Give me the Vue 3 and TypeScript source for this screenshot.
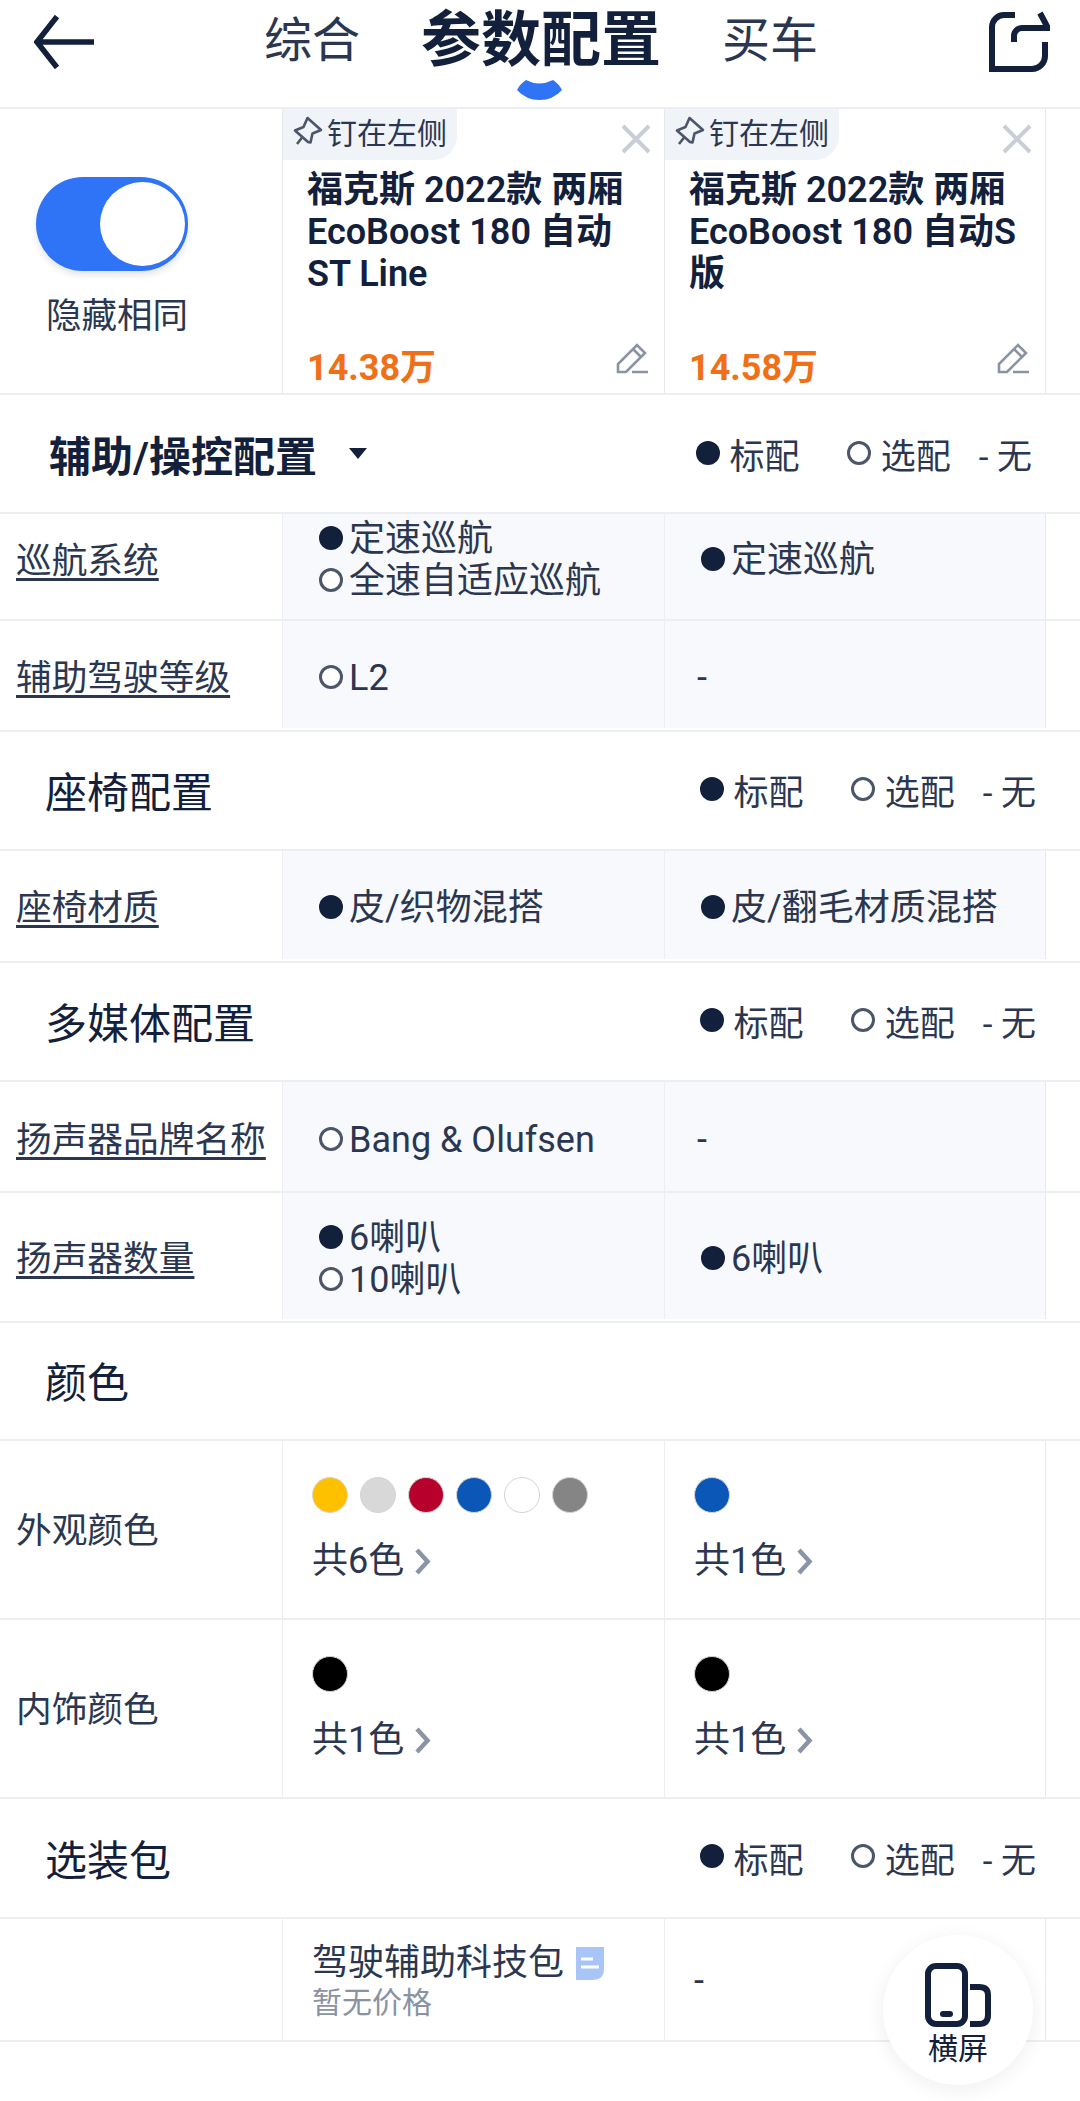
<script setup lang="ts">
type Val = { mark?: 'std' | 'opt'; text: string }
type Row = { kind: 'row'; label: string; link: boolean; cls: string; a: Val[]; b: Val[] }
type Sec = { kind: 'sec'; title: string; legend: boolean; cls: string }
type Col = { kind: 'col'; label: string; a: string[]; b: string[]; at: string; bt: string }
type Item = Row | Sec | Col

const items: Item[] = [
  { kind: 'row', label: '巡航系统', link: true, cls: 'r-cruise',
    a: [{ mark: 'std', text: '定速巡航' }, { mark: 'opt', text: '全速自适应巡航' }], b: [{ mark: 'std', text: '定速巡航' }] },
  { kind: 'row', label: '辅助驾驶等级', link: true, cls: 'r-111 end',
    a: [{ mark: 'opt', text: 'L2' }], b: [{ text: '-' }] },
  { kind: 'sec', title: '座椅配置', legend: true, cls: 's-119' },
  { kind: 'row', label: '座椅材质', link: true, cls: 'r-112 end',
    a: [{ mark: 'std', text: '皮/织物混搭' }], b: [{ mark: 'std', text: '皮/翻毛材质混搭' }] },
  { kind: 'sec', title: '多媒体配置', legend: true, cls: 's-119' },
  { kind: 'row', label: '扬声器品牌名称', link: true, cls: 'r-111',
    a: [{ mark: 'opt', text: 'Bang & Olufsen' }], b: [{ text: '-' }] },
  { kind: 'row', label: '扬声器数量', link: true, cls: 'r-130 end',
    a: [{ mark: 'std', text: '6喇叭' }, { mark: 'opt', text: '10喇叭' }], b: [{ mark: 'std', text: '6喇叭' }] },
  { kind: 'sec', title: '颜色', legend: false, cls: 's-118' },
  { kind: 'col', label: '外观颜色', a: ['#ffc000', '#d8d8d8', '#b8002c', '#0a57b8', '#ffffff', '#858585'], b: ['#0a57b8'], at: '共6色', bt: '共1色' },
  { kind: 'col', label: '内饰颜色', a: ['#000000'], b: ['#000000'], at: '共1色', bt: '共1色' },
  { kind: 'sec', title: '选装包', legend: true, cls: 's-120' }
]

const cars = [
  { name: '福克斯 2022款 两厢 EcoBoost 180 自动 ST Line', price: '14.38万' },
  { name: '福克斯 2022款 两厢 EcoBoost 180 自动S版', price: '14.58万' }
]
</script>

<template>
  <div class="page">
    <header class="top">
      <svg class="back" viewBox="0 0 60 54" width="60" height="54" fill="none" stroke="#13203b" stroke-width="5.5">
        <path d="M23 1.5 3 27l20 25.5M3 27h57" />
      </svg>
      <nav class="tabs">
        <span class="tab">综合</span>
        <span class="tab active">参数配置
          <svg class="crescent" viewBox="0 0 45 20" width="45" height="20"><path d="M9 0Q22 7 36 0Q42 4 45 10Q36 20 22.5 20Q9 20 0 10Q3 4 9 0Z" fill="#2f73f6" /></svg>
        </span>
        <span class="tab">买车</span>
      </nav>
      <svg class="share" viewBox="28 10 62 62" width="62" height="62" fill="none" stroke="#13203b" stroke-width="6">
        <path d="M55 15H44A12 12 0 0 0 32 27V69H72A13 13 0 0 0 85 56V42" />
        <path d="M54 42V36A8 8 0 0 1 62 28H88L80 13" />
      </svg>
    </header>

    <section class="cars">
      <div class="toggle-cell">
        <div class="toggle"><i class="thumb"></i></div>
        <span class="toggle-text">隐藏相同</span>
      </div>
      <div v-for="car in cars" :key="car.price" class="car">
        <div class="car-top">
          <div class="pin">
            <svg viewBox="0 0 30 30" width="30" height="30" fill="none" stroke="#4c566a" stroke-width="2.6">
              <path d="M14.500 2 28 14 19.500 17.500 17.500 26.500 15 26 2 14.500 10.500 11Z" stroke-linejoin="round" />
              <path d="M9.500 21 4 28" />
            </svg>
            <span>钉在左侧</span>
          </div>
          <svg class="close" viewBox="0 0 30 30" width="30" height="30" stroke="#c9ced6" stroke-width="4"><path d="M2 2 28 28M28 2 2 28" /></svg>
        </div>
        <div class="car-name">{{ car.name }}</div>
        <div class="car-foot">
          <span class="price">{{ car.price }}</span>
          <svg class="edit" viewBox="0 0 32 32" width="32" height="32" fill="none" stroke="#8a93a3" stroke-width="2.6">
            <path d="M2 30V22L21 3 29 11 10 30ZM17 7 25 15M16 30H32" />
          </svg>
        </div>
      </div>
      <div class="tail"></div>
    </section>

    <div class="sec first">
      <span class="sec-title bold">辅助/操控配置<i class="caret"></i></span>
      <span class="legend">
        <span class="lg"><i class="dot std"></i>标配</span>
        <span class="lg"><i class="dot opt"></i>选配</span>
        <span class="lg">- 无</span>
      </span>
    </div>

    <template v-for="item in items" :key="item.kind + ('label' in item ? item.label : item.title)">
      <div v-if="item.kind === 'sec'" class="sec" :class="item.cls">
        <span class="sec-title">{{ item.title }}</span>
        <span v-if="item.legend" class="legend">
          <span class="lg"><i class="dot std"></i>标配</span>
          <span class="lg"><i class="dot opt"></i>选配</span>
          <span class="lg">- 无</span>
        </span>
      </div>
      <div v-else-if="item.kind === 'row'" class="row" :class="item.cls">
        <div class="label"><u>{{ item.label }}</u></div>
        <div v-for="(vals, i) in [item.a, item.b]" :key="i" class="val">
          <div v-for="v in vals" :key="v.text" class="line" :class="{ plain: !v.mark }">
            <i v-if="v.mark" class="dot" :class="v.mark"></i><span>{{ v.text }}</span>
          </div>
        </div>
        <div class="tail"></div>
      </div>
      <div v-else class="row r-col">
        <div class="label">{{ item.label }}</div>
        <div v-for="(side, i) in [{ c: item.a, t: item.at }, { c: item.b, t: item.bt }]" :key="i" class="colors">
          <div class="swatches">
            <i v-for="(c, j) in side.c" :key="j" class="swatch" :style="{ background: c }"></i>
          </div>
          <div class="count">{{ side.t }}
            <svg viewBox="0 0 17 27" width="17" height="27" fill="none" stroke="#8a94a6" stroke-width="4.500"><path d="M3 2 13.500 13.500 3 25" /></svg>
          </div>
        </div>
        <div class="tail"></div>
      </div>
    </template>

    <div class="row r-pack">
      <div class="label"></div>
      <div class="colors pack">
        <div class="pack-name">驾驶辅助科技包
          <svg viewBox="0 0 28 33" width="28" height="33"><path d="M0 0H28V22Q28 33 16 33H0Z" fill="#a9c5f8" /><path d="M5 12H17M5 20H23" stroke="#fff" stroke-width="3" /></svg>
        </div>
        <div class="pack-price">暂无价格</div>
      </div>
      <div class="colors pack"><div class="dash">-</div></div>
      <div class="tail"></div>
    </div>

    <button class="fab">
      <svg viewBox="0 0 66 64" width="66" height="64" fill="none" stroke="#13203b" stroke-width="6">
        <rect x="3" y="3" width="37" height="58" rx="8" />
        <path d="M45 24H54Q63 24 63 32V52Q63 61 54 61H45" />
        <path d="M18 51H25" stroke-linecap="round" />
      </svg>
      <span>横屏</span>
    </button>
  </div>
</template>

<style>
html, body { margin: 0; background: #fff; }
</style>

<style scoped>
.page {
  position: relative;
  width: 1080px;
  height: 2101px;
  overflow: hidden;
  background: #fff;
  color: #13203b;
  font-family: Roboto, "Noto Sans CJK SC", sans-serif;
  font-size: 36px;
}
i { display: block; font-style: normal; }

.top {
  height: 109px;
  box-sizing: border-box;
  border-bottom: 2px solid #eceef1;
  display: flex;
  align-items: flex-start;
  justify-content: space-between;
  padding: 0 30px 0 34px;
}
.back { margin-top: 15px; }
.share { margin-top: 10px; }
.tabs { display: flex; gap: 61px; align-items: center; height: 82px; }
.tab { position: relative; font-size: 48px; line-height: 82px; color: #2b3750; }
.tab.active { font-size: 60px; font-weight: 700; color: #13203b; }
.crescent { position: absolute; left: 96px; top: 80px; }

.cars {
  height: 286px;
  box-sizing: border-box;
  display: grid;
  grid-template-columns: 282px 382px 381px 35px;
  border-bottom: 2px solid #eceef1;
}
.toggle-cell { display: flex; flex-direction: column; align-items: flex-start; padding: 68px 0 0 36px; }
.toggle {
  width: 152px;
  height: 94px;
  box-sizing: border-box;
  padding: 5px 3px 5px 64px;
  border-radius: 47px;
  background: #2f73f6;
  box-shadow: 0 4px 6px rgba(19, 32, 59, 0.12);
}
.thumb { width: 85px; height: 84px; border-radius: 50%; background: #fff; }
.toggle-text { margin: 21px 0 0 10px; font-size: 35.5px; line-height: 48px; color: #2b3750; }
.car {
  border-left: 1px solid #e6e8ec;
  display: flex;
  flex-direction: column;
}
.car-top { display: flex; justify-content: space-between; align-items: flex-start; height: 51px; padding-right: 13px; }
.pin {
  width: 174px;
  height: 51px;
  box-sizing: border-box;
  display: flex;
  align-items: center;
  gap: 4px;
  padding: 0 0 8px 10px;
  background: #f0f3f8;
  border-bottom-right-radius: 24px;
  font-size: 30px;
  color: #2b3750;
  white-space: nowrap;
}
.close { margin-top: 15px; }
.car-name {
  margin: 9px 0 0 24px;
  width: 345px;
  font-size: 36px;
  line-height: 42px;
  font-weight: 600;
}
.car-foot { margin-top: auto; display: flex; justify-content: space-between; align-items: flex-start; padding: 0 16px 3px 24px; }
.edit { margin-top: -4px; }
.price { font-size: 36px; font-weight: 700; line-height: 44px; color: #f07017; }
.tail { border-left: 1px solid #e6e8ec; }

.sec {
  box-sizing: border-box;
  display: flex;
  justify-content: space-between;
  align-items: center;
  padding: 0 44px 2px 45px;
  border-bottom: 2px solid #eceef1;
}
.s-118 { height: 118px; padding-bottom: 4px; }
.s-119 { height: 119px; }
.s-120 { height: 120px; }
.sec.first { height: 119px; padding: 0 48px 0 49px; }
.sec-title { font-size: 42px; display: flex; align-items: center; }
.sec-title.bold { font-weight: 600; }
.caret {
  margin: 0 0 0 32px;
  width: 0;
  height: 0;
  border-left: 9px solid transparent;
  border-right: 9px solid transparent;
  border-top: 11px solid #13203b;
}
.legend { display: flex; align-items: center; gap: 47px; font-size: 35px; color: #2b3750; }
.lg { display: flex; align-items: center; gap: 10px; white-space: pre; }
.lg:last-child { margin-left: -19px; }

.dot { flex: none; width: 24px; height: 24px; box-sizing: border-box; border-radius: 50%; margin-top: -2px; }
.dot.std { background: #13203b; }
.dot.opt { border: 3px solid #4c566a; background: #fff; }

.row {
  display: grid;
  grid-template-columns: 282px 382px 381px 35px;
  box-sizing: border-box;
  border-bottom: 2px solid #eceef1;
}
.row.end { padding-bottom: 2px; }
.r-cruise { height: 107px; }
.r-111 { height: 111px; }
.r-112 { height: 112px; }
.r-130 { height: 130px; }
.r-col { height: 179px; }
.r-pack { height: 123px; }
.label { display: flex; align-items: center; box-sizing: border-box; padding: 0 0 1px 16px; font-size: 35.7px; color: #2b3750; white-space: nowrap; }
.label u { text-underline-offset: 5px; }
.r-cruise .label { padding-bottom: 19px; }
.r-col .label { padding-bottom: 5px; }
.val {
  box-sizing: border-box;
  background: #f7f9fc;
  border-left: 1px solid #eceef1;
  padding: 6px 0 0 36px;
  display: flex;
  flex-direction: column;
  justify-content: center;
  color: #2b3750;
}
.r-cruise .val { padding: 2px 0 16px 36px; }
.line { display: flex; align-items: center; gap: 6px; line-height: 42px; }
.line.plain { margin-left: -4px; }
.colors {
  box-sizing: border-box;
  border-left: 1px solid #eceef1;
  padding-left: 29px;
  display: flex;
  flex-direction: column;
}
.swatches { display: flex; gap: 12px; margin-top: 36px; }
.swatch { width: 36px; height: 36px; box-sizing: border-box; border-radius: 50%; border: 1px solid #d4d4d4; }
.count { display: flex; align-items: center; gap: 10px; margin-top: 24px; line-height: 48px; color: #2b3750; }
.pack { justify-content: center; padding-top: 3px; }
.pack-name { display: flex; align-items: center; gap: 12px; line-height: 44px; color: #2b3750; }
.pack-price { font-size: 30px; line-height: 36px; color: #8a93a3; }
.dash { color: #2b3750; }

.fab {
  position: absolute;
  left: 883px;
  top: 1935px;
  width: 150px;
  height: 150px;
  border: none;
  border-radius: 50%;
  padding: 28px 0 0;
  background: #fff;
  box-shadow: 0 4px 20px rgba(19, 32, 59, 0.07);
  display: flex;
  flex-direction: column;
  align-items: center;
  font-family: inherit;
  font-size: 30px;
  line-height: 40px;
  color: #13203b;
}
.fab svg { margin-bottom: 2px; }
</style>
